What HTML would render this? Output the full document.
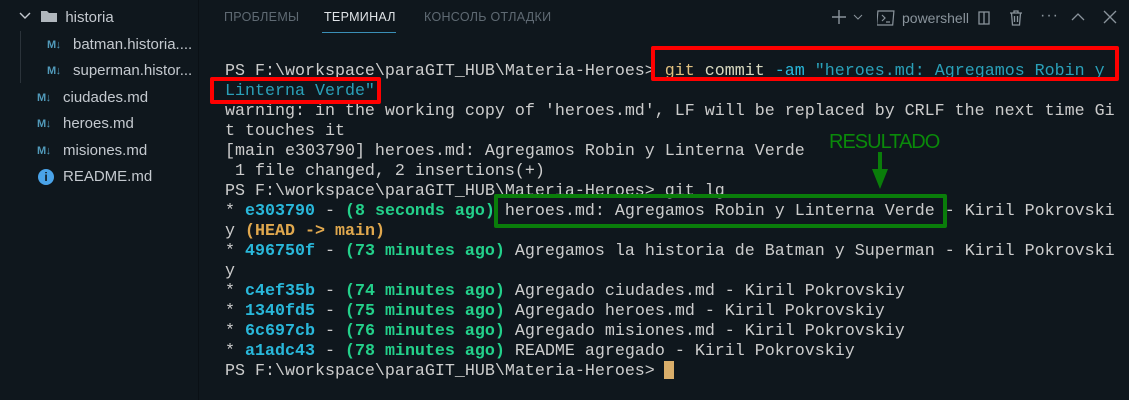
<!DOCTYPE html>
<html><head><meta charset="utf-8"><style>
*{margin:0;padding:0;box-sizing:border-box}
body{width:1129px;height:400px;background:#0f171d;position:relative;overflow:hidden;font-family:"Liberation Sans",sans-serif}
.side{position:absolute;left:0;top:0;width:199px;height:400px;background:#0f171d;border-right:1px solid #0a1015}
.row{position:absolute;height:26px;font-size:15px;color:#c4c9cf;white-space:nowrap;line-height:26px}
.md{position:absolute;font-size:11px;font-weight:bold;color:#519aba;letter-spacing:-0.5px}
.tab{position:absolute;top:10px;font-size:12.5px;color:#5f6a73;letter-spacing:.3px}
.term{position:absolute;left:225px;top:62px;font-family:"Liberation Mono",monospace;font-size:16.67px;line-height:20px;color:#cccccc;white-space:pre}
.c{color:#29b8db;font-weight:bold}.g{color:#23d18b;font-weight:bold}.h{color:#e0a84e;font-weight:bold}
.y{color:#e0c080}.s{color:#2aa0b8}.cy{color:#29b8db}
.box{position:absolute;border-radius:2px}
.ic{position:absolute;top:8px;color:#8a949c}
</style></head><body>
<div class="side">
 <div class="row" style="left:18px;top:5px"><svg width="14" height="14" style="vertical-align:-1px" viewBox="0 0 14 14"><path d="M2 4l5 5 5-5" stroke="#c4c9cf" fill="none" stroke-width="1.4"/></svg>
 <svg width="18" height="14" style="vertical-align:-1px;margin-left:4px" viewBox="0 0 18 14"><path d="M1 2h6l2 2h8v9H1z" fill="#b0b7bd"/></svg> <span style="margin-left:3px">historia</span></div>
 <div style="position:absolute;left:20px;top:31px;width:1px;height:52px;background:#2b333a"></div>
 <div class="md" style="left:47px;top:39px">M↓</div><div class="row" style="left:73px;top:32px">batman.historia....</div>
 <div class="md" style="left:47px;top:65px">M↓</div><div class="row" style="left:73px;top:58px">superman.histor...</div>
 <div class="md" style="left:37px;top:92px">M↓</div><div class="row" style="left:63px;top:85px">ciudades.md</div>
 <div class="md" style="left:37px;top:118px">M↓</div><div class="row" style="left:63px;top:111px">heroes.md</div>
 <div class="md" style="left:37px;top:145px">M↓</div><div class="row" style="left:63px;top:138px">misiones.md</div>
 <div style="position:absolute;left:38px;top:169px;width:16px;height:16px;border-radius:50%;background:#4aa3e8;color:#0f171d;font-size:12px;font-weight:bold;text-align:center;line-height:16px">i</div>
 <div class="row" style="left:63px;top:164px">README.md</div>
</div>
<div class="tab" style="left:224px">ПРОБЛЕМЫ</div>
<div class="tab" style="left:324px;color:#e0e4e8">ТЕРМИНАЛ</div>
<div style="position:absolute;left:322px;top:32px;width:74px;height:1px;background:#3a8fb7"></div>
<div class="tab" style="left:424px">КОНСОЛЬ ОТЛАДКИ</div>
<svg class="ic" style="left:830px" width="18" height="18" viewBox="0 0 18 18"><path d="M9 2v14M2 9h14" stroke="#8a949c" stroke-width="1.4"/></svg>
<svg class="ic" style="left:853px;top:13px" width="10" height="8" viewBox="0 0 10 8"><path d="M1 2l4 4 4-4" stroke="#8a949c" fill="none"/></svg>
<svg class="ic" style="left:877px;top:10px" width="18" height="16" viewBox="0 0 18 16"><rect x="1" y="1" width="16" height="14" fill="none" stroke="#8a949c" stroke-width="1.2" transform="skewX(-5)"/><path d="M5 5l3 3-3 3M9 12h4" stroke="#8a949c" fill="none" stroke-width="1.2"/></svg>
<div class="ic" style="left:902px;top:10px;font-size:14px">powershell</div>
<svg class="ic" style="left:976px;top:10px" width="16" height="16" viewBox="0 0 16 16"><path d="M3 2h10v12H3zM8 2v12" stroke="#8a949c" fill="none" stroke-width="1.3"/></svg>
<svg class="ic" style="left:1008px;top:9px" width="16" height="17" viewBox="0 0 16 17"><path d="M2 4h12M6 4V2h4v2M3.5 4l1 12h7l1-12M6.5 7v6M9.5 7v6" stroke="#8a949c" fill="none" stroke-width="1.3"/></svg>
<div class="ic" style="left:1040px;top:7px;font-size:16px;letter-spacing:1px">···</div>
<svg class="ic" style="left:1071px;top:12px" width="14" height="10" viewBox="0 0 14 10"><path d="M1 8l6-6 6 6" stroke="#8a949c" fill="none" stroke-width="1.3"/></svg>
<svg class="ic" style="left:1103px;top:10px" width="14" height="14" viewBox="0 0 14 14"><path d="M1 1l12 12M13 1L1 13" stroke="#8a949c" stroke-width="1.3"/></svg>
<div class="term">PS F:\workspace\paraGIT_HUB\Materia-Heroes> <span class="y">git</span> <span style="color:#d8d8c0">commit</span> <span class="cy">-am</span> <span class="s">"heroes.md: Agregamos Robin y</span>
<span class="s">Linterna Verde"</span>
warning: in the working copy of 'heroes.md', LF will be replaced by CRLF the next time Gi
t touches it
[main e303790] heroes.md: Agregamos Robin y Linterna Verde
 1 file changed, 2 insertions(+)
PS F:\workspace\paraGIT_HUB\Materia-Heroes> git lg
* <span class="c">e303790</span> - <span class="g">(8 seconds ago)</span> heroes.md: Agregamos Robin y Linterna Verde - Kiril Pokrovski
y <span class="h">(HEAD -&gt; main)</span>
* <span class="c">496750f</span> - <span class="g">(73 minutes ago)</span> Agregamos la historia de Batman y Superman - Kiril Pokrovski
y
* <span class="c">c4ef35b</span> - <span class="g">(74 minutes ago)</span> Agregado ciudades.md - Kiril Pokrovskiy
* <span class="c">1340fd5</span> - <span class="g">(75 minutes ago)</span> Agregado heroes.md - Kiril Pokrovskiy
* <span class="c">6c697cb</span> - <span class="g">(76 minutes ago)</span> Agregado misiones.md - Kiril Pokrovskiy
* <span class="c">a1adc43</span> - <span class="g">(78 minutes ago)</span> README agregado - Kiril Pokrovskiy
PS F:\workspace\paraGIT_HUB\Materia-Heroes> </div>
<div style="position:absolute;left:664px;top:361px;width:10px;height:18px;background:#d9ae6a"></div>
<div class="box" style="left:651px;top:46px;width:468px;height:35px;border:4px solid #ff0000"></div>
<div class="box" style="left:210px;top:77px;width:171px;height:27px;border:4px solid #ff0000"></div>
<div class="box" style="left:494px;top:194px;width:453px;height:34px;border:4px solid #0a7d0a"></div>
<div style="position:absolute;left:829px;top:131px;font-size:20px;color:#0a8a0a;letter-spacing:-1px">RESULTADO</div>
<svg style="position:absolute;left:870px;top:152px" width="20" height="40" viewBox="0 0 20 40"><path d="M8 0h4v18h-4z" fill="#0a7d0a"/><path d="M2 17h16L10 37z" fill="#0a7d0a"/></svg>
</body></html>
